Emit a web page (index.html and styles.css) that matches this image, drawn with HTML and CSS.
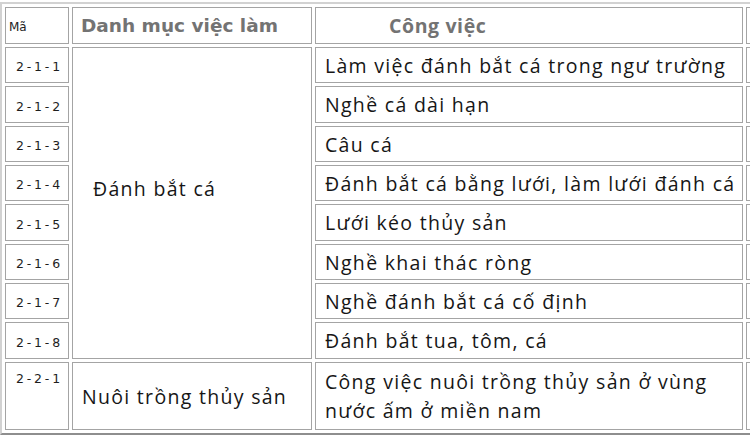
FILE: index.html
```html
<!DOCTYPE html>
<html lang="vi">
<head>
<meta charset="utf-8">
<title>Danh mục việc làm</title>
<link rel="stylesheet" href="styles.css">
</head>
<body>
<table class="grid">
  <thead>
    <tr class="row-head">
      <th class="c-code c-ma">Mã</th>
      <th class="c-cat h-cat">Danh mục việc làm</th>
      <th class="c-job h-job">Công việc</th>
      <th class="c-extra h-extra"></th>
    </tr>
  </thead>
  <tbody>
    <tr class="row r36">
      <td class="code">2-1-1</td>
      <td class="cat cat-main" rowspan="8">Đánh bắt cá</td>
      <td class="job">Làm việc đánh bắt cá trong ngư trường</td>
      <td class="extra"></td>
    </tr>
    <tr class="row r37">
      <td class="code">2-1-2</td>
      <td class="job">Nghề cá dài hạn</td>
      <td class="extra"></td>
    </tr>
    <tr class="row r36">
      <td class="code">2-1-3</td>
      <td class="job">Câu cá</td>
      <td class="extra"></td>
    </tr>
    <tr class="row r36">
      <td class="code">2-1-4</td>
      <td class="job">Đánh bắt cá bằng lưới, làm lưới đánh cá</td>
      <td class="extra"></td>
    </tr>
    <tr class="row r37">
      <td class="code">2-1-5</td>
      <td class="job">Lưới kéo thủy sản</td>
      <td class="extra"></td>
    </tr>
    <tr class="row r36">
      <td class="code">2-1-6</td>
      <td class="job">Nghề khai thác ròng</td>
      <td class="extra"></td>
    </tr>
    <tr class="row r36">
      <td class="code">2-1-7</td>
      <td class="job">Nghề đánh bắt cá cố định</td>
      <td class="extra"></td>
    </tr>
    <tr class="row r37">
      <td class="code">2-1-8</td>
      <td class="job">Đánh bắt tua, tôm, cá</td>
      <td class="extra"></td>
    </tr>
    <tr class="row-last">
      <td class="code code-top">2-2-1</td>
      <td class="cat">Nuôi trồng thủy sản</td>
      <td class="job job-wrap">Công việc nuôi trồng thủy sản ở vùng<br>nước ấm ở miền nam</td>
      <td class="extra"></td>
    </tr>
  </tbody>
</table>
</body>
</html>
```

FILE: styles.css
```css
html, body {
  margin: 0;
  padding: 0;
  background: #ffffff;
  overflow: hidden;
}

body {
  width: 750px;
  height: 437px;
}

.grid {
  margin-top: 2px;
  width: 791px;
  table-layout: fixed;
  border-collapse: separate;
  border-spacing: 3px;
  border: 2px solid;
  border-color: #d2d2d2 #8e8e8e #8e8e8e #d2d2d2;
}

.grid th,
.grid td {
  box-sizing: border-box;
  border: 1px solid #a4a4a4;
  padding: 0 9px;
  vertical-align: middle;
  text-align: left;
  color: #161616;
  font-family: "Open Sans", "Noto Sans", sans-serif;
  font-size: 19.5px;
  font-weight: 400;
  letter-spacing: 1.3px;
  white-space: nowrap;
  overflow: hidden;
}

.grid .c-code { width: 64px; }
.grid .c-cat { width: 240px; }
.grid .c-job { width: 428px; }
.grid .c-extra { width: 40px; }

.row-head th { height: 37px; }
.r36 td { height: 36px; }
.r37 td { height: 37px; }
.row-last td { height: 68px; }

.grid .c-ma {
  padding-left: 3px;
  padding-top: 2px;
  font-family: "DejaVu Sans", sans-serif;
  font-size: 12px;
  letter-spacing: 0;
  color: #222222;
}

.grid .h-cat {
  padding-left: 8px;
  font-family: "DejaVu Sans", sans-serif;
  font-size: 18.5px;
  font-weight: 700;
  letter-spacing: 0;
  color: #737373;
}

.grid .h-job {
  padding-left: 73px;
  font-family: "Open Sans", sans-serif;
  font-size: 19.5px;
  font-weight: 700;
  letter-spacing: 0.6px;
  color: #737373;
}

.grid .code {
  padding-left: 10px;
  padding-top: 3px;
  font-family: "DejaVu Sans", sans-serif;
  font-size: 12.5px;
  letter-spacing: 2.8px;
  color: #1e1e1e;
}

.grid .code-top {
  vertical-align: top;
  padding-top: 8px;
}

.grid .cat-main {
  padding-left: 20px;
  padding-bottom: 30px;
}

.grid .job {
  padding-left: 9px;
}

.grid .job-wrap {
  line-height: 29px;
}
```
